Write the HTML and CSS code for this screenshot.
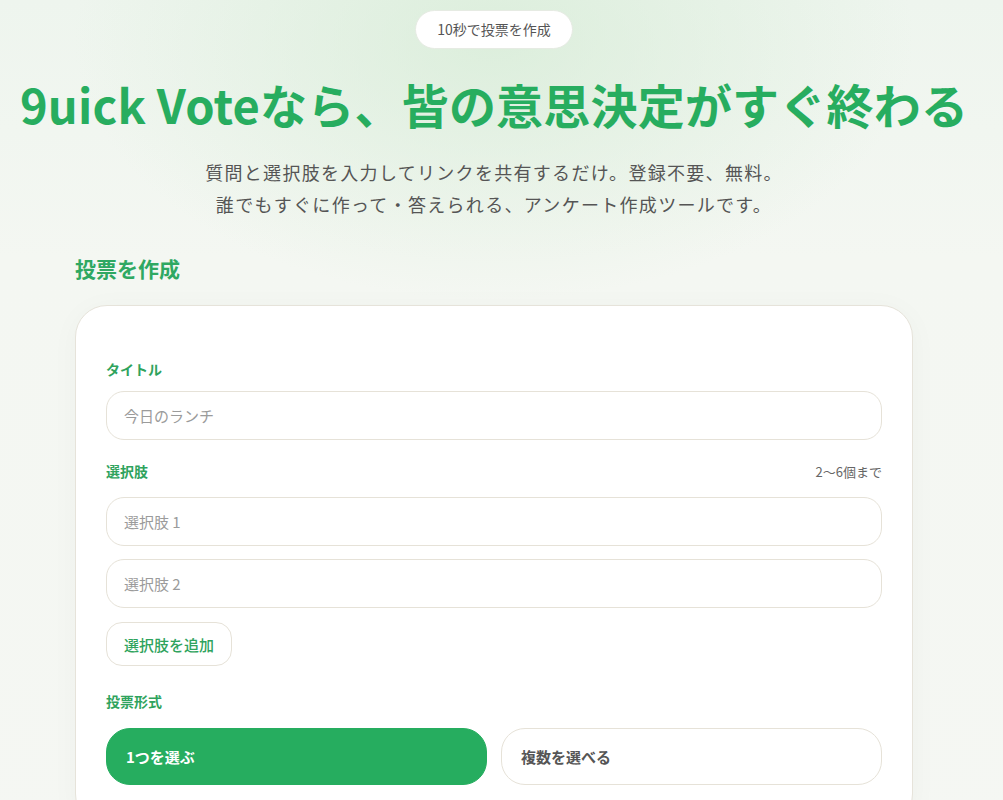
FILE: index.html
```html
<!DOCTYPE html>
<html lang="ja">

<head>
    <meta charset="UTF-8">
    <meta name="viewport" content="width=device-width, initial-scale=1.0">
    <title>9uick Vote</title>

    <link rel="stylesheet" href="styles.css">
</head>

<body>
    <div class="page">
        <header class="hero">
            <span class="badge">10秒で投票を作成</span>
            <h1 class="hero-title">9uick Voteなら、皆の意思決定がすぐ終わる</h1>
            <p class="hero-lead">
                質問と選択肢を入力してリンクを共有するだけ。登録不要、無料。<br>
                誰でもすぐに作って・答えられる、アンケート作成ツールです。
            </p>
        </header>

        <main class="create">
            <h2 class="section-title">投票を作成</h2>

            <form class="card">
                <div class="field">
                    <label class="field-label" for="title">タイトル</label>
                    <input class="text-input" id="title" type="text" placeholder="今日のランチ">
                </div>

                <div class="field">
                    <div class="label-row">
                        <span class="field-label">選択肢</span>
                        <span class="hint">2〜6個まで</span>
                    </div>
                    <div class="choices">
                        <input class="text-input" type="text" placeholder="選択肢 1">
                        <input class="text-input" type="text" placeholder="選択肢 2">
                    </div>
                    <button class="add-btn" type="button">選択肢を追加</button>
                </div>

                <div class="field field-mode">
                    <span class="field-label">投票形式</span>
                    <div class="mode">
                        <button class="mode-btn active" type="button">1つを選ぶ</button>
                        <button class="mode-btn" type="button">複数を選べる</button>
                    </div>
                </div>
            </form>
        </main>
    </div>
</body>

</html>
```

FILE: styles.css
```css
html,
body {
    margin: 0;
    min-height: 100%;
}

body {
    font-family: "Noto Sans CJK JP", "Noto Sans", sans-serif;
    color: #444;
    background:
        radial-gradient(ellipse 420px 260px at 494px 40px, rgba(214, 236, 214, 0.75), rgba(214, 236, 214, 0) 100%),
        linear-gradient(180deg, #eef5ee 0, #f4f7f2 260px, #f5f7f3 100%);
}

.page {
    width: 988px;
    padding-bottom: 80px;
}

/* ヘッダー */
.hero {
    padding-top: 10px;
    text-align: center;
}

.badge {
    display: inline-block;
    box-sizing: border-box;
    height: 39px;
    padding: 0 21px;
    border: 1px solid #e6ebe3;
    border-radius: 20px;
    background-color: #ffffff;

    font-size: 14px;
    line-height: 37px;
    color: #555;
}

.hero-title {
    margin: 27px 0 0;
    font-size: 47px;
    line-height: 56px;
    font-weight: 700;
    letter-spacing: 0.2px;
    color: #27ad5f;
}

.hero-lead {
    margin: 24px 0 0;
    font-size: 18px;
    line-height: 32px;
    letter-spacing: 1.3px;
    color: #555;
}

/* 作成フォーム */
.create {
    width: 838px;
    margin: 33px auto 0;
}

.section-title {
    margin: 0 0 22px;
    font-size: 21px;
    line-height: 30px;
    font-weight: 700;
    color: #2fa862;
}

.card {
    box-sizing: border-box;
    padding: 53px 30px 40px;
    border: 1px solid #e6e3da;
    border-radius: 32px;
    background-color: #ffffff;
    box-shadow:
        rgba(0, 0, 0, 0.03) 0 4px 30px;
}

.field {
    display: flex;
    flex-direction: column;
}

.field + .field {
    margin-top: 21px;
}

.field-mode {
    margin-top: 25px !important;
}

.field-label {
    font-size: 14px;
    line-height: 20px;
    font-weight: 700;
    color: #2fa35d;
}

.field > .field-label {
    margin-bottom: 12px;
}

.field-mode > .field-label {
    margin-bottom: 17px;
}

.label-row {
    display: flex;
    justify-content: space-between;
    align-items: center;
    margin-bottom: 16px;
}

.hint {
    font-size: 13px;
    color: #666;
}

.text-input {
    box-sizing: border-box;
    width: 100%;
    height: 49px;
    padding: 0 17px;
    border: 1px solid #e6e2d8;
    border-radius: 18px;
    background-color: #ffffff;

    font-family: inherit;
    font-size: 15px;
    color: #333;
    outline: none;
}

.text-input::placeholder {
    color: #9b9b9b;
}

.choices {
    display: flex;
    flex-direction: column;
    gap: 13px;
}

.add-btn {
    align-self: flex-start;
    box-sizing: border-box;
    height: 44px;
    margin-top: 14px;
    padding: 0 17px;
    border: 1px solid #e6e2d8;
    border-radius: 16px;
    background-color: #ffffff;

    font-family: inherit;
    font-size: 15px;
    font-weight: 500;
    color: #2fa35d;
}

.mode {
    display: grid;
    grid-template-columns: 1fr 1fr;
    gap: 14px;
}

.mode-btn {
    box-sizing: border-box;
    height: 57px;
    padding: 0 19px;
    border: 1px solid #e6e2d8;
    border-radius: 24px;
    background-color: #ffffff;
    text-align: left;

    font-family: inherit;
    font-size: 15px;
    font-weight: 700;
    color: #555;
}

.mode-btn.active {
    border-color: #26ad5f;
    background-color: #26ad5f;
    color: #ffffff;
}
```
